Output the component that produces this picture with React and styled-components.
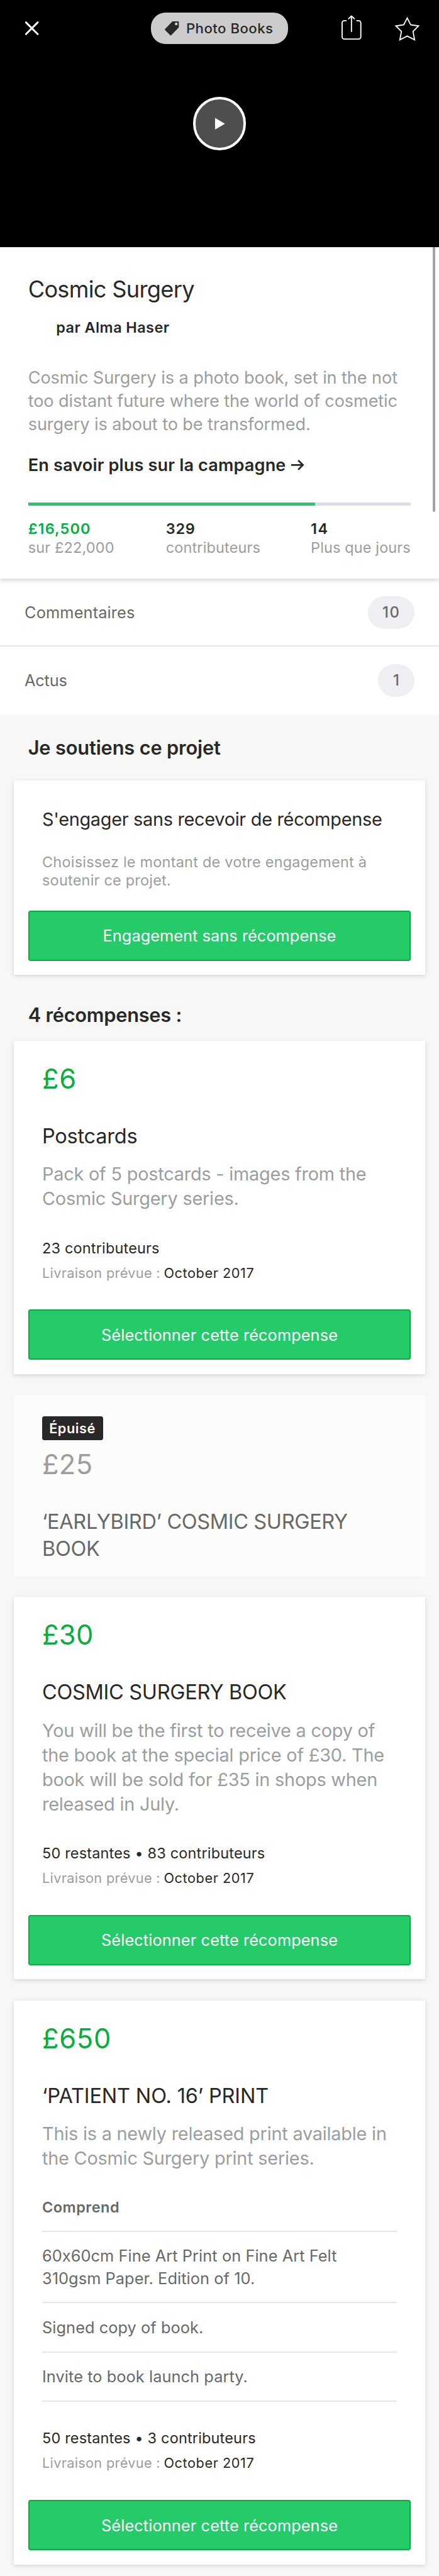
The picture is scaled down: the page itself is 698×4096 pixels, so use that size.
import React from "react";
import styled, { createGlobalStyle } from "styled-components";

/* Design units (750-wide artboard) to page pixels. */
const u = (n) => `${(n * 0.930909).toFixed(3)}px`;

const color = {
  ink: "#282828",
  grey: "#656969",
  soft: "#9b9e9e",
  green: "#25cb68",
  greenDark: "#05ae3d",
  rule: "#e6e7e7",
  pageBg: "#f7f7f5",
};

const GlobalStyle = createGlobalStyle`
  *, *::before, *::after { box-sizing: border-box; }
  body {
    margin: 0;
    background: ${color.pageBg};
    font-family: Inter, "Liberation Sans", sans-serif;
    font-feature-settings: "calt" 0;
    -webkit-font-smoothing: antialiased;
  }
  h1, h2, h3, p, ul, dl, dt, dd { margin: 0; padding: 0; font-weight: 400; }
  button { font: inherit; border: 0; padding: 0; background: none; }
`;

const Page = styled.main`
  position: relative;
  width: 100%;
  height: 4096px;
  overflow: hidden;
  color: ${color.ink};
`;

const Line = styled.span`
  display: block;
  white-space: nowrap;
  letter-spacing: ${(p) => p.$track || 0}em;
`;

/* ---------- Hero ---------- */

const Hero = styled.header`
  position: relative;
  height: ${u(422)};
  background: #000;
  display: grid;
  place-items: center;
`;

const TopBar = styled.nav`
  position: absolute;
  inset: 0 0 auto 0;
  height: ${u(96)};
  padding: 0 ${u(32)};
  display: grid;
  grid-template-columns: 1fr auto 1fr;
  align-items: center;
`;

const IconGroup = styled.div`
  display: flex;
  justify-content: flex-end;
  gap: ${u(57)};
`;

const BarSide = styled.div`
  display: flex;
  padding-left: ${u(10)};
`;

const Category = styled.div`
  display: flex;
  align-items: center;
  gap: ${u(12)};
  width: ${u(234)};
  height: ${u(54)};
  padding-left: ${u(24)};
  border-radius: ${u(25)};
  background: #ccc;
  font-size: ${u(23.8)};
  font-weight: 500;
  line-height: ${u(54)};
`;

const Icon = styled.svg`
  display: block;
  flex: none;
  width: ${(p) => u(p.$w)};
  height: ${(p) => u(p.$h)};
  overflow: visible;
`;

const PlayButton = styled.button`
  width: ${u(91)};
  height: ${u(91)};
  border: ${u(4.4)} solid #fff;
  border-radius: 50%;
  background: #4e4e4e;
  display: grid;
  place-items: center;
`;

const ScrollThumb = styled.div`
  position: absolute;
  z-index: 3;
  top: ${u(422)};
  right: ${u(6)};
  width: ${u(5)};
  height: ${u(452)};
  border-radius: 0 0 3px 3px;
  background: #a2a2a2;
`;

/* ---------- Campaign summary ---------- */

const Summary = styled.section`
  position: relative;
  z-index: 1;
  height: ${u(566)};
  padding: ${u(48)} ${u(48)} 0;
  background: #fff;
  box-shadow: 0 3px 7px rgba(0, 0, 0, 0.17);
`;

const ProjectTitle = styled.h1`
  font-size: ${u(38.8)};
  line-height: ${u(48)};
`;

const Author = styled.p`
  margin-top: ${u(25.8)};
  padding-left: ${u(48)};
  font-size: ${u(25.2)};
  font-weight: 600;
  line-height: ${u(32)};
`;

const Blurb = styled.p`
  margin-top: ${u(49)};
  font-size: ${u(29.1)};
  line-height: ${u(40)};
  color: ${color.soft};
`;

const MoreLink = styled.p`
  display: flex;
  align-items: center;
  gap: ${u(9)};
  margin-top: ${u(30)};
  font-size: ${u(29.1)};
  font-weight: 600;
  line-height: ${u(40)};
`;

const Progress = styled.div`
  margin-top: ${u(43.2)};
  height: ${u(6)};
  background: #dadde7;
`;

const ProgressFill = styled.div`
  width: 75%;
  height: 100%;
  background: ${color.green};
`;

const Stats = styled.dl`
  display: grid;
  grid-template-columns: ${u(235.3)} ${u(247.5)} auto;
  margin-top: ${u(23.5)};
  font-size: ${u(25.2)};
  line-height: ${u(32.3)};
`;

const StatValue = styled.dt`
  font-weight: 600;
  color: ${(p) => (p.$accent ? color.greenDark : color.ink)};
`;

const StatLabel = styled.dd`
  color: ${color.soft};
`;

/* ---------- Navigation rows ---------- */

const NavRow = styled.div`
  display: flex;
  align-items: center;
  justify-content: space-between;
  height: ${u(116)};
  padding: 0 ${u(42)};
  background: #fff;
  box-shadow: ${(p) => (p.$divided ? `inset 0 -2px 0 ${color.rule}` : "none")};
  font-size: ${u(27.2)};
  color: ${color.grey};
`;

const Count = styled.span`
  width: ${(p) => u(p.$w)};
  height: ${u(56)};
  border-radius: ${u(28)};
  background: #eeeef3;
  font-size: ${u(25.6)};
  font-weight: 500;
  line-height: ${u(56)};
  text-align: center;
`;

/* ---------- Rewards ---------- */

const Rewards = styled.section`
  padding: ${u(36.5)} ${u(24)} 0;
  background: ${color.pageBg};
`;

const SectionTitle = styled.h2`
  margin: ${(p) => u(p.$top || 0)} 0 ${(p) => u(p.$bottom)} ${u(24)};
  font-size: ${u(33)};
  font-weight: 600;
  line-height: ${u(40)};
`;

const Card = styled.article`
  padding: ${(p) => u(p.$top || 36.7)} ${u(24)} ${u(24)};
  background: #fff;
  box-shadow: 0 2px 7px rgba(0, 0, 0, 0.14);

  & + & { margin-top: ${u(36)}; }
`;

const SoldOutCard = styled(Card)`
  padding-top: ${u(36)};
  padding-bottom: ${u(22.7)};
  background: #fcfcfa;
  box-shadow: none;
`;

const CardBody = styled.div`
  padding: 0 ${u(24)};
`;

const SoldOutTag = styled.div`
  width: ${u(104)};
  height: ${u(41)};
  margin-bottom: ${u(13.1)};
  padding-left: ${u(12)};
  border-radius: ${u(4)};
  background: ${color.ink};
  color: #fff;
  font-size: ${u(23.3)};
  font-weight: 600;
  line-height: ${u(41)};
`;

const PledgeTitle = styled.h3`
  font-size: ${u(31)};
  line-height: ${u(40)};
`;

const PledgeCopy = styled.p`
  margin-top: ${u(38)};
  font-size: ${u(25.2)};
  line-height: ${u(31)};
  color: ${color.soft};
`;

const Price = styled.p`
  font-size: ${u(46.6)};
  line-height: ${u(56)};
  color: ${(p) => (p.$muted ? color.soft : color.greenDark)};
`;

const RewardTitle = styled.h3`
  margin-top: ${u(48.2)};
  font-size: ${u(34.9)};
  line-height: ${u(46)};
  color: ${(p) => (p.$muted ? color.grey : color.ink)};
`;

const RewardCopy = styled.p`
  margin-top: ${u(19.7)};
  font-size: ${u(31)};
  line-height: ${u(42)};
  color: ${color.soft};
`;

const Includes = styled.ul`
  list-style: none;
  margin-top: ${u(47)};
  font-size: ${u(27.2)};
  line-height: ${u(38)};
  color: ${color.grey};
`;

const IncludesTitle = styled.li`
  height: ${u(58.3)};
  border-bottom: 2px solid ${color.rule};
  font-size: ${u(25.2)};
  font-weight: 600;
  line-height: ${u(32)};
`;

const IncludesItem = styled.li`
  padding: ${u(21.8)} 0 ${u(21.9)};
  border-bottom: 2px solid ${color.rule};
`;

const Backers = styled.p`
  margin-top: ${u(47.2)};
  font-size: ${u(25.2)};
  line-height: ${u(32)};
`;

const Delivery = styled.p`
  display: flex;
  gap: ${u(6)};
  margin-top: ${u(11)};
  font-size: ${u(23.3)};
  line-height: ${u(32)};
`;

const DeliveryLabel = styled(Line)`
  color: ${color.soft};
`;

const ActionButton = styled.button`
  display: flex;
  align-items: center;
  justify-content: center;
  width: 100%;
  height: ${u(86)};
  margin-top: ${(p) => u(p.$top || 46.2)};
  border: 2px solid ${color.greenDark};
  border-radius: ${u(4)};
  background: ${color.green};
  color: #fff;
  font-size: ${u(27.2)};
`;

const CloseIcon = () => (
  <Icon $w={26} $h={26} viewBox="0 0 26 26" fill="none" stroke="#fff" strokeWidth="3.2" strokeLinecap="round">
    <path d="M2.500 2.800 22.500 22.800M22.500 2.800 2.500 22.800" />
  </Icon>
);

const TagIcon = () => (
  <Icon $w={24} $h={24} viewBox="0 0 24 24" fill={color.ink}>
    <path
      fillRule="evenodd"
      d="M13.6 0H23a1 1 0 0 1 1 1v8.800a1.500 1.500 0 0 1-.450 1.050L11 23.600a1.200 1.200 0 0 1-1.700 0L.4 14.900a1.200 1.200 0 0 1 0-1.700L12.500.450A1.500 1.500 0 0 1 13.600 0ZM19.600 2a2.400 2.400 0 1 0 0 4.800 2.400 2.400 0 0 0 0-4.800Z"
    />
  </Icon>
);

const ShareIcon = () => (
  <Icon $w={34} $h={44} viewBox="0 0 34 44" fill="none" stroke="#fff" strokeWidth="2" strokeLinecap="round" strokeLinejoin="round">
    <path d="M8 9.500H5a4 4 0 0 0-4 4V37a4 4 0 0 0 4 4h24a4 4 0 0 0 4-4V13.500a4 4 0 0 0-4-4h-3M17 28V1.500M12.200 6.200 17 1.500l4.800 4.700" />
  </Icon>
);

const StarIcon = () => (
  <Icon $w={44} $h={44} viewBox="0 0 44 44" fill="none" stroke="#fff" strokeWidth="2">
    <path d="M22 5 28 16.600 41.300 18.500 31.900 28 34.600 42.200 22 35.800 9.400 42.200 12.100 28 2.700 18.500 16 16.600Z" />
  </Icon>
);

const ArrowIcon = () => (
  <Icon $w={22} $h={18} viewBox="0 0 22 18" fill="none" stroke={color.ink} strokeWidth="3" strokeLinejoin="miter">
    <path d="M0 9H20M12 1.200 20 9l-8 7.800" />
  </Icon>
);

function Reward({ price, priceTrack, title, titleTrack, copy, includes, backers }) {
  return (
    <Card>
      <CardBody>
        <Price><Line $track={priceTrack}>{price}</Line></Price>
        <RewardTitle><Line $track={titleTrack}>{title}</Line></RewardTitle>
        <RewardCopy>
          {copy.map((t) => <Line key={t} $track={-0.0072}>{t}</Line>)}
        </RewardCopy>
        {includes && (
          <Includes>
            <IncludesTitle><Line $track={0.0222}>Comprend</Line></IncludesTitle>
            {includes.map((lines) => (
              <IncludesItem key={lines[0]}>
                {lines.map((t) => <Line key={t} $track={0.003}>{t}</Line>)}
              </IncludesItem>
            ))}
          </Includes>
        )}
        <Backers><Line $track={0.0082}>{backers}</Line></Backers>
        <Delivery>
          <DeliveryLabel $track={0.0151}>Livraison prévue :</DeliveryLabel>
          <Line $track={0.0263}>October 2017</Line>
        </Delivery>
      </CardBody>
      <ActionButton><Line $track={0.004}>Sélectionner cette récompense</Line></ActionButton>
    </Card>
  );
}

export default function App() {
  return (
    <Page>
      <GlobalStyle />
      <Hero>
        <PlayButton aria-label="Lecture">
          <Icon $w={17} $h={20} viewBox="0 0 17 20" fill="#fff">
            <path d="M1 0.500 18 10.500 1 20.500Z" />
          </Icon>
        </PlayButton>
        <TopBar>
          <BarSide><CloseIcon /></BarSide>
          <Category>
            <TagIcon />
            <Line $track={0.0227}>Photo Books</Line>
          </Category>
          <IconGroup><ShareIcon /><StarIcon /></IconGroup>
        </TopBar>
      </Hero>
      <ScrollThumb />

      <Summary>
        <ProjectTitle><Line $track={-0.0184}>Cosmic Surgery</Line></ProjectTitle>
        <Author><Line $track={0.0181}>par Alma Haser</Line></Author>
        <Blurb>
          <Line $track={-0.0027}>Cosmic Surgery is a photo book, set in the not</Line>
          <Line $track={-0.0036}>too distant future where the world of cosmetic</Line>
          <Line $track={-0.003}>surgery is about to be transformed.</Line>
        </Blurb>
        <MoreLink>
          <Line $track={0.0057}>En savoir plus sur la campagne</Line>
          <ArrowIcon />
        </MoreLink>
        <Progress><ProgressFill /></Progress>
        <Stats>
          <div>
            <StatValue $accent><Line $track={0.0497}>£16,500</Line></StatValue>
            <StatLabel><Line $track={0.0079}>sur £22,000</Line></StatLabel>
          </div>
          <div>
            <StatValue><Line $track={0.0345}>329</Line></StatValue>
            <StatLabel><Line $track={0.0071}>contributeurs</Line></StatLabel>
          </div>
          <div>
            <StatValue><Line $track={0.06}>14</Line></StatValue>
            <StatLabel><Line $track={0.0061}>Plus que jours</Line></StatLabel>
          </div>
        </Stats>
      </Summary>

      <NavRow $divided>
        <Line $track={0.0053}>Commentaires</Line>
        <Count $w={79}><Line $track={0.06}>10</Line></Count>
      </NavRow>
      <NavRow>
        <Line $track={-0.0082}>Actus</Line>
        <Count $w={62}>1</Count>
      </NavRow>

      <Rewards>
        <SectionTitle $bottom={36.5}><Line $track={-0.0042}>Je soutiens ce projet</Line></SectionTitle>
        <Card $top={46.7}>
          <CardBody>
            <PledgeTitle><Line $track={-0.0098}>S'engager sans recevoir de récompense</Line></PledgeTitle>
            <PledgeCopy>
              <Line $track={0.01}>Choisissez le montant de votre engagement à</Line>
              <Line $track={0.01}>soutenir ce projet.</Line>
            </PledgeCopy>
          </CardBody>
          <ActionButton $top={35.3}><Line $track={0.0021}>Engagement sans récompense</Line></ActionButton>
        </Card>

        <SectionTitle $top={48.5} $bottom={24.5}><Line $track={-0.0072}>4 récompenses :</Line></SectionTitle>
        <Reward
          price="£6"
          priceTrack={0.0172}
          title="Postcards"
          titleTrack={-0.0066}
          copy={["Pack of 5 postcards - images from the", "Cosmic Surgery series."]}
          backers="23 contributeurs"
        />
        <SoldOutCard>
          <CardBody>
            <SoldOutTag><Line $track={0.0256}>Épuisé</Line></SoldOutTag>
            <Price $muted><Line $track={0.0088}>£25</Line></Price>
            <RewardTitle $muted>
              <Line $track={-0.0103}>‘EARLYBIRD’ COSMIC SURGERY</Line>
              <Line $track={-0.0103}>BOOK</Line>
            </RewardTitle>
          </CardBody>
        </SoldOutCard>
        <Reward
          price="£30"
          priceTrack={0.0088}
          title="COSMIC SURGERY BOOK"
          titleTrack={-0.0086}
          copy={[
            "You will be the first to receive a copy of",
            "the book at the special price of £30. The",
            "book will be sold for £35 in shops when",
            "released in July.",
          ]}
          backers="50 restantes • 83 contributeurs"
        />
        <Reward
          price="£650"
          priceTrack={0.0172}
          title="‘PATIENT NO. 16’ PRINT"
          titleTrack={-0.0045}
          copy={["This is a newly released print available in", "the Cosmic Surgery print series."]}
          includes={[
            ["60x60cm Fine Art Print on Fine Art Felt", "310gsm Paper. Edition of 10."],
            ["Signed copy of book."],
            ["Invite to book launch party."],
          ]}
          backers="50 restantes • 3 contributeurs"
        />
      </Rewards>
    </Page>
  );
}
